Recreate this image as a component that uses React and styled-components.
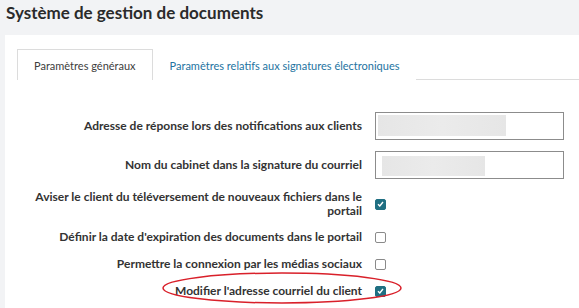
import React from "react";
import styled, { createGlobalStyle } from "styled-components";

const GlobalStyle = createGlobalStyle`
  html, body {
    margin: 0;
    padding: 0;
    background: #f2f3f5;
    font-family: "Lato", "Open Sans", sans-serif;
    overflow: hidden;
  }
`;

const Page = styled.div`
  width: 579px;
  height: 308px;
  background: #f2f3f5;
  overflow: hidden;
`;

const Title = styled.h1`
  margin: 0;
  padding: 3px 0 0 6px;
  height: 32px;
  font-size: 17px;
  font-weight: 700;
  color: #2b2b2b;
  line-height: 20px;
`;

const Panel = styled.div`
  margin-left: 5px;
  background: #fff;
  padding: 14px 0 0 12px;
  height: 300px;
`;

const TabBar = styled.div`
  display: flex;
  border-bottom: 1px solid #dcdcdc;
  height: 30px;
`;

const Tab = styled.div`
  display: flex;
  align-items: center;
  padding: 0 16px;
  font-size: 11px;
  color: ${(p) => (p.active ? "#3d3d3d" : "#24739f")};
  background: #fff;
  border: 1px solid ${(p) => (p.active ? "#dcdcdc" : "transparent")};
  border-bottom: none;
  margin-bottom: -1px;
  height: 31px;
  box-sizing: border-box;
`;

const Form = styled.div`
  display: flex;
  flex-direction: column;
  gap: 11px;
  margin-top: 32px;
`;

const Row = styled.div`
  position: relative;
  display: grid;
  grid-template-columns: 345px 189px;
  column-gap: 13px;
  align-items: center;
  min-height: 16px;
`;

const Label = styled.label`
  text-align: right;
  font-size: 12px;
  font-weight: 700;
  color: #333;
  line-height: 14px;
`;

const Input = styled.div`
  height: 28px;
  box-sizing: border-box;
  border: 1px solid #8c8c8c;
  padding: ${(p) => p.pad};
  display: flex;
  align-items: stretch;
`;

const Redacted = styled.div`
  width: ${(p) => p.w}px;
  background: linear-gradient(90deg, #e6e6e6, #ebebeb 50%, #e6e6e6);
`;

const Check = styled.span`
  width: 11px;
  height: 11px;
  box-sizing: border-box;
  border-radius: 2px;
  border: 1px solid ${(p) => (p.checked ? "#1f6f82" : "#8a8a8a")};
  background: ${(p) => (p.checked ? "#1f6f82" : "#fff")};
  display: flex;
  align-items: center;
  justify-content: center;
`;

const Ellipse = styled.svg`
  position: absolute;
  left: 145px;
  top: -11px;
  overflow: visible;
`;

const CheckBox = ({ checked }) => (
  <Check checked={checked}>
    {checked && (
      <svg width="7" height="6" viewBox="0 0 7 6">
        <path d="M1 3.2 L2.8 5 L6 1" fill="none" stroke="#fff" strokeWidth="1.4" />
      </svg>
    )}
  </Check>
);

export default function App() {
  return (
    <Page>
      <GlobalStyle />
      <Title>Système de gestion de documents</Title>
      <Panel>
        <TabBar>
          <Tab active>Paramètres généraux</Tab>
          <Tab>Paramètres relatifs aux signatures électroniques</Tab>
        </TabBar>
        <Form>
          <Row>
            <Label>Adresse de réponse lors des notifications aux clients</Label>
            <Input pad="2px 56px 3px 2px">
              <Redacted w={128} />
            </Input>
          </Row>
          <Row>
            <Label>Nom du cabinet dans la signature du courriel</Label>
            <Input pad="4px 78px 2px 6px">
              <Redacted w={103} />
            </Input>
          </Row>
          <Row>
            <Label>Aviser le client du téléversement de nouveaux fichiers dans le portail</Label>
            <CheckBox checked />
          </Row>
          <Row>
            <Label>Définir la date d'expiration des documents dans le portail</Label>
            <CheckBox />
          </Row>
          <Row>
            <Label>Permettre la connexion par les médias sociaux</Label>
            <CheckBox />
          </Row>
          <Row>
            <Label>Modifier l'adresse courriel du client</Label>
            <CheckBox checked />
            <Ellipse width="240" height="32">
              <ellipse cx="120" cy="16" rx="119" ry="15" fill="none" stroke="#d9202a" strokeWidth="1.5" />
            </Ellipse>
          </Row>
        </Form>
      </Panel>
    </Page>
  );
}
